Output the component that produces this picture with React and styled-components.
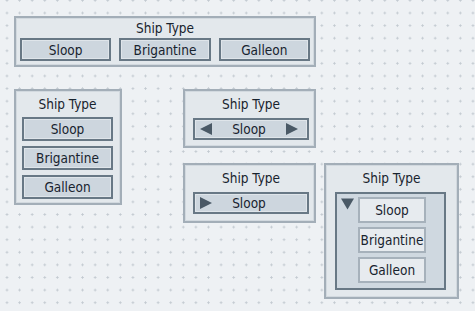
import React from "react";
import styled, { createGlobalStyle } from "styled-components";

const GlobalStyle = createGlobalStyle`
  html, body {
    margin: 0;
    padding: 0;
    background-color: #eef1f4;
    background-image: radial-gradient(circle, #c2c9d0 0.9px, transparent 1.3px);
    background-size: 12.6px 12.6px;
    background-position: 0.7px -5.9px;
    font-family: "DejaVu Sans Condensed", "DejaVu Sans", sans-serif;
    font-stretch: condensed;
    color: #18232e;
  }
  #root {
    width: 475px;
    height: 311px;
  }
`;

const Page = styled.div`
  display: flex;
  flex-direction: column;
  gap: 22px;
  padding: 16px 0 0 14px;
`;

const Row = styled.div`
  display: flex;
  align-items: flex-start;
`;

const Column = styled.div`
  display: flex;
  flex-direction: column;
  gap: 15px;
  margin-left: ${p => p.$left || 0}px;
  margin-top: ${p => p.$top || 0}px;
`;

const Panel = styled.div`
  box-sizing: border-box;
  width: ${p => p.$w}px;
  height: ${p => p.$h}px;
  background: #e3e8ec;
  border: 2px solid #a3aeb8;
  box-shadow: inset 0 0 0 1px #d2d9df;
  display: flex;
  flex-direction: column;
  padding: ${p => p.$pad};
`;

const Title = styled.div`
  height: ${p => p.$h}px;
  display: flex;
  align-items: center;
  justify-content: center;
  font-size: 13.5px;
  line-height: 1;
  padding-top: 1px;
  box-sizing: border-box;
`;

const ButtonRow = styled.div`
  display: flex;
  gap: ${p => p.$gap}px;
`;

const Button = styled.div`
  box-sizing: border-box;
  flex: ${p => (p.$grow ? 1 : "none")};
  height: ${p => p.$h}px;
  background: #cdd6de;
  border: 2px solid #687885;
  box-shadow: inset 0 0 0 1px #dfe5ea;
  display: flex;
  align-items: center;
  justify-content: ${p => p.$justify || "center"};
  font-size: 13.5px;
  padding: ${p => p.$pad || "0 8px"};
`;

const Stack = styled.div`
  display: flex;
  flex-direction: column;
  gap: ${p => p.$gap}px;
`;

const Dropdown = styled.div`
  box-sizing: border-box;
  height: 98px;
  margin: 0 11px 0 9px;
  background: #cfd8e0;
  border: 2px solid #687885;
  display: flex;
  align-items: flex-start;
  gap: 4px;
  padding: 3px 4px;
`;

const Item = styled.div`
  box-sizing: border-box;
  width: 68px;
  height: 26px;
  background: #e7ebef;
  border: 2px solid #a6b1bb;
  display: flex;
  align-items: center;
  justify-content: center;
  font-size: 13.5px;
`;

const Label = styled.span`
  flex: 1;
  text-align: center;
`;

const Tri = ({ dir, style }) => {
  const pts = {
    left: "12,0 12,12 0,6",
    right: "0,0 0,12 12,6",
    down: "0,0 13,0 6.5,11",
  }[dir];
  return (
    <svg width={dir === "down" ? 13 : 12} height={12} viewBox={dir === "down" ? "0 0 13 11" : "0 0 12 12"} style={style}>
      <polygon points={pts} fill="#4a5966" />
    </svg>
  );
};

const ships = ["Sloop", "Brigantine", "Galleon"];

export default function App() {
  return (
    <>
      <GlobalStyle />
      <Page>
        <Panel $w={302} $h={51} $pad="0 4px 4px">
          <Title $h={20}>Ship Type</Title>
          <ButtonRow $gap={8}>
            {ships.map(s => (
              <Button key={s} $grow $h={23}>{s}</Button>
            ))}
          </ButtonRow>
        </Panel>
        <Row>
          <Panel $w={108} $h={116} $pad="0 7px 4px 6px">
            <Title $h={26}>Ship Type</Title>
            <Stack $gap={5}>
              {ships.map(s => (
                <Button key={s} $h={24}>{s}</Button>
              ))}
            </Stack>
          </Panel>
          <Column $left={61}>
            <Panel $w={133} $h={59} $pad="0 5px 6px 8px">
              <Title $h={27}>Ship Type</Title>
              <Button $h={22} $justify="space-between" $pad="0 9px 0 5px">
                <Tri dir="left" />
                <Label>Sloop</Label>
                <Tri dir="right" />
              </Button>
            </Panel>
            <Panel $w={133} $h={60} $pad="0 5px 6px 8px">
              <Title $h={27}>Ship Type</Title>
              <Button $h={22} $justify="space-between" $pad="0 21px 0 5px">
                <Tri dir="right" />
                <Label>Sloop</Label>
              </Button>
            </Panel>
          </Column>
          <Column $left={8} $top={74}>
            <Panel $w={135} $h={136} $pad="0 0 7px">
              <Title $h={27}>Ship Type</Title>
              <Dropdown>
                <Tri dir="down" style={{ marginTop: 1 }} />
                <Stack $gap={4}>
                  {ships.map(s => (
                    <Item key={s}>{s}</Item>
                  ))}
                </Stack>
              </Dropdown>
            </Panel>
          </Column>
        </Row>
      </Page>
    </>
  );
}
